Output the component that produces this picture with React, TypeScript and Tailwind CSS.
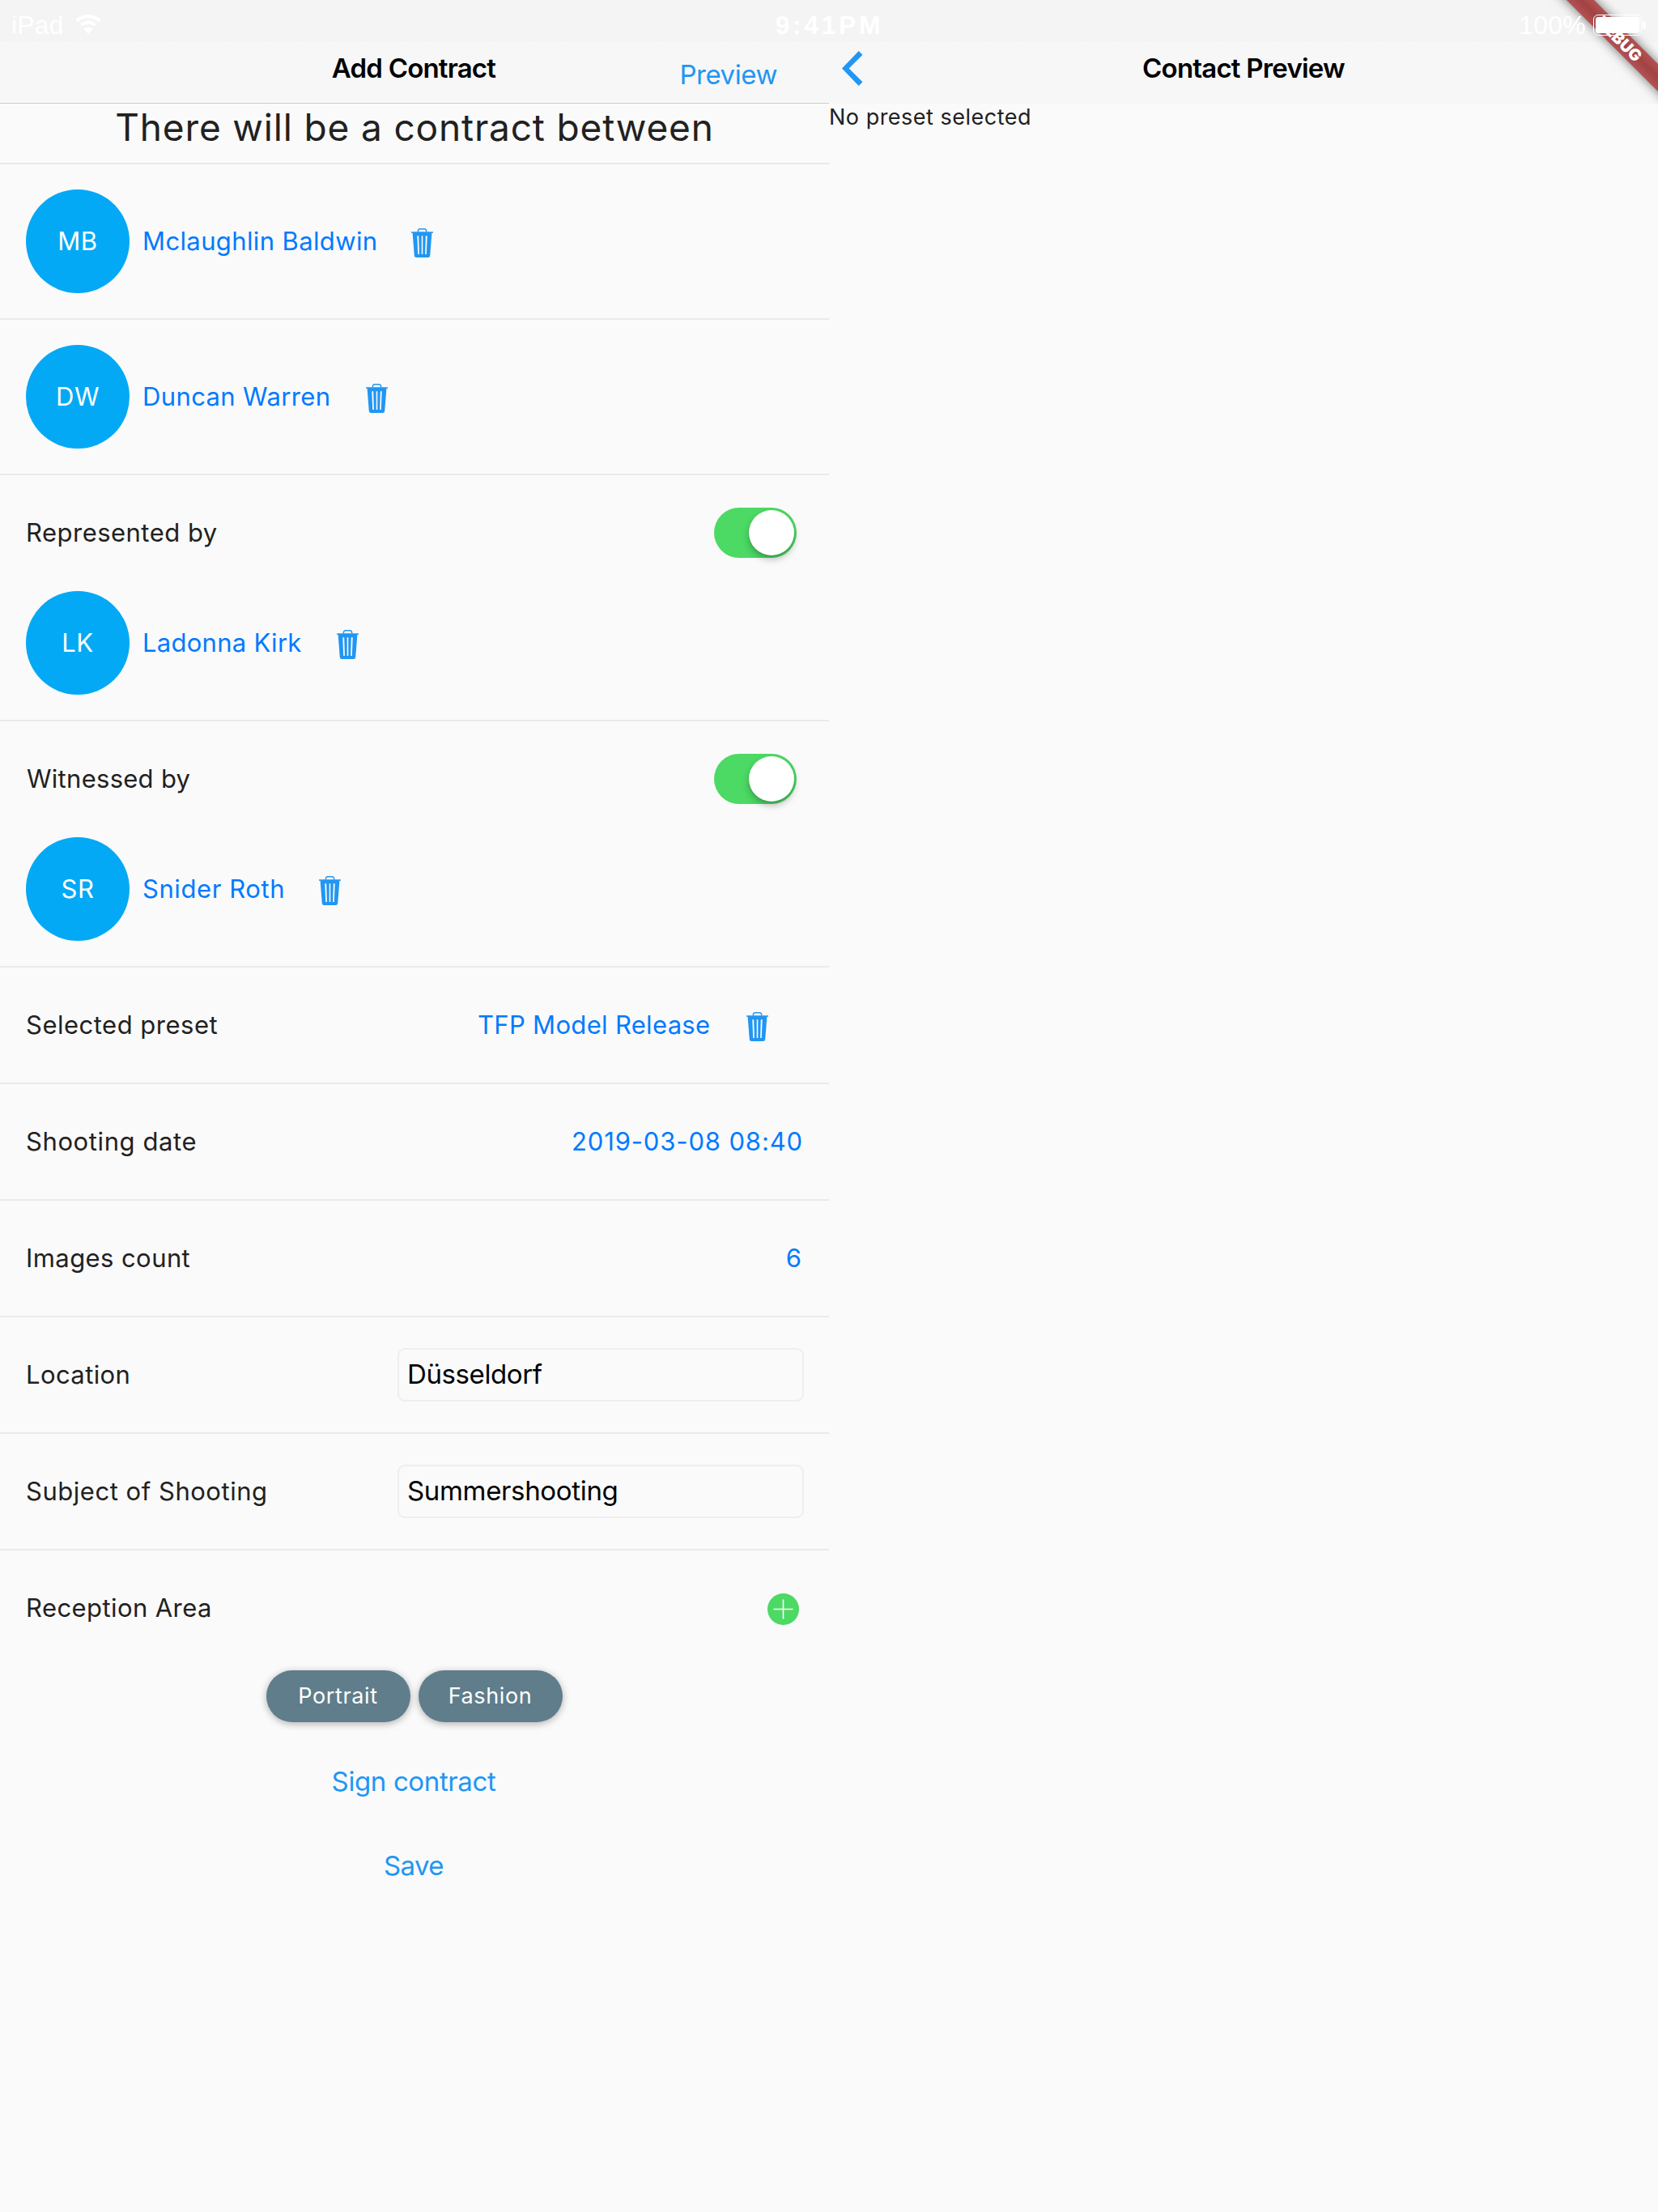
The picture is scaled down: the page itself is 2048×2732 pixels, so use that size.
import type { ReactNode } from "react";

type Person = {
  initials: string;
  name: string;
  nameClass: string;
};

const parties: Person[] = [
  { initials: "MB", name: "Mclaughlin Baldwin", nameClass: "w-[332px] tracking-[0.38px]" },
  { initials: "DW", name: "Duncan Warren", nameClass: "w-[276px] tracking-[0.37px]" },
];

const representative: Person = {
  initials: "LK",
  name: "Ladonna Kirk",
  nameClass: "w-[240px] tracking-[0.28px]",
};

const witness: Person = {
  initials: "SR",
  name: "Snider Roth",
  nameClass: "w-[218px] tracking-[0.58px]",
};

const areas = [
  { label: "Portrait", textClass: "pr-px tracking-[0.65px]" },
  { label: "Fashion", textClass: "pr-px tracking-[0.6px]" },
];

function TrashIcon() {
  return (
    <svg width="27" height="36" viewBox="0 0 27 36" fill="none" className="block shrink-0">
      <path
        d="M8.4 4.5V3a2.2 2.2 0 0 1 2.2-2.2h5.8A2.2 2.2 0 0 1 18.600 3v1.500"
        stroke="#2196f3"
        strokeWidth="1.5"
      />
      <path
        fillRule="evenodd"
        clipRule="evenodd"
        d="M0 4.200H27V5.800H25.400L23.200 33.700A2.500 2.500 0 0 1 20.700 36H6.300A2.500 2.500 0 0 1 3.800 33.700L1.600 5.800H0ZM7.300 9.200L8.200 32H9.900L9.200 9.200ZM12.700 9.200V32H14.300V9.200ZM17.800 9.200L17.100 32H18.800L19.700 9.200Z"
        fill="#2196f3"
      />
    </svg>
  );
}

function WifiIcon() {
  return (
    <svg width="32" height="24" viewBox="0 0 32 24" fill="none" className="block">
      <path d="M1.600 7.900Q16 -3.700 30.400 7.900" stroke="#fff" strokeWidth="4.300" />
      <path d="M7.200 13Q16 6.200 24.800 13" stroke="#fff" strokeWidth="4" />
      <path d="M10.300 17.500Q16 13.300 21.700 17.500L16 24Z" fill="#fff" />
    </svg>
  );
}

function BackIcon() {
  return (
    <svg width="26" height="43" viewBox="0 0 26 43" className="block">
      <path d="M20.700 0L25.500 4.700L8.600 21.500L25.500 38.300L20.700 43L0 21.500Z" fill="#2196f3" />
    </svg>
  );
}

function AddIcon() {
  return (
    <svg width="39" height="39" viewBox="0 0 39 39" className="block">
      <circle cx="19.500" cy="19.500" r="19.500" fill="#4cd964" />
      <path d="M7.500 19.500H31.500M19.500 7.500V31.500" stroke="#fff" strokeWidth="1.600" />
    </svg>
  );
}

function StatusBar() {
  return (
    <div className="absolute inset-x-0 top-0 z-20 flex h-[52px] text-[32px] leading-[62px] text-white font-['Liberation_Sans',sans-serif]">
      <div className="flex flex-1 gap-[14px] pl-[14px]">
        <span className="tracking-[0.2px]">iPad</span>
        <div className="pt-[18px]">
          <WifiIcon />
        </div>
      </div>
      <span className="pl-[2px] font-bold tracking-[3.6px]">9:41PM</span>
      <div className="flex flex-1 justify-end gap-[9px] pr-[15px]">
        <span className="tracking-[0.2px]">100%</span>
        <div className="mt-[18px] flex h-[26px] items-center gap-px">
          <div className="h-[26px] w-[60px] rounded-[6px] border border-white p-[2px]">
            <div className="h-full rounded-[3px] bg-white" />
          </div>
          <div className="h-[10px] w-1 rounded-r-full bg-white" />
        </div>
      </div>
    </div>
  );
}

function DebugBanner() {
  return (
    <div className="pointer-events-none absolute right-0 top-0 z-10 size-40 overflow-hidden">
      <div className="absolute left-[12px] top-[36px] h-6 w-[200px] rotate-45 bg-linear-to-b from-[#b25252] via-[#a34242] to-[#b25252] text-center text-[20px] font-black leading-6 text-white shadow-[0_0_14px_rgba(0,0,0,0.55)]">
        DEBUG
      </div>
    </div>
  );
}

function Avatar({ initials }: { initials: string }) {
  return (
    <div className="flex size-32 shrink-0 items-center justify-center rounded-full bg-[#04a9f5] text-[31px] tracking-[0.5px] text-white">
      {initials}
    </div>
  );
}

function PersonRow({ person }: { person: Person }) {
  return (
    <div className="flex items-center pl-8">
      <Avatar initials={person.initials} />
      <span className={`ml-4 whitespace-nowrap text-[31px] text-[#007aff] ${person.nameClass}`}>
        {person.name}
      </span>
      <div className="pt-1">
        <TrashIcon />
      </div>
    </div>
  );
}

function Switch() {
  return (
    <div className="mr-2 flex h-[62px] w-[102px] items-center justify-end rounded-full bg-[#4cd964] pr-[3px]">
      <div className="size-14 rounded-full bg-white shadow-[0_5px_8px_rgba(0,0,0,0.25),0_1px_2px_rgba(0,0,0,0.1)]" />
    </div>
  );
}

function FieldRow({
  label,
  labelClass,
  children,
}: {
  label: string;
  labelClass: string;
  children: ReactNode;
}) {
  return (
    <div className="flex h-[142px] items-center justify-between px-8">
      <span className={`whitespace-nowrap text-[31px] ${labelClass}`}>{label}</span>
      {children}
    </div>
  );
}

function Section({ children }: { children: ReactNode }) {
  return <section className="border-b-2 border-[#eaeaea]">{children}</section>;
}

function RoleSection({
  label,
  labelClass,
  person,
}: {
  label: string;
  labelClass: string;
  person: Person;
}) {
  return (
    <Section>
      <div className="pb-[31px]">
        <div className="h-[143px]">
          <FieldRow label={label} labelClass={labelClass}>
            <Switch />
          </FieldRow>
        </div>
        <PersonRow person={person} />
      </div>
    </Section>
  );
}

function TextBox({ value, textClass }: { value: string; textClass: string }) {
  return (
    <div className={`-mr-px flex h-[66px] w-[502px] items-center rounded-[9px] border-2 border-[#eeeeee] pl-[10px] text-[33px] text-black ${textClass}`}>
      {value}
    </div>
  );
}

function NavBar({ children, bordered }: { children: ReactNode; bordered?: boolean }) {
  return (
    <header
      className={`h-32 bg-linear-to-b from-[#f4f4f4] from-[52px] to-[#f7f7f7] to-[52px] pt-10 ${
        bordered ? "border-b border-[#cbcbcb]" : ""
      }`}
    >
      <div className="grid h-[88px] grid-cols-[1fr_auto_1fr] items-center">{children}</div>
    </header>
  );
}

function ContractForm() {
  return (
    <div className="w-[1024px]">
      <NavBar bordered>
        <span />
        <h1 className="pr-[2px] pt-px text-[33px] font-semibold tracking-[-0.8px] text-black">
          Add Contract
        </h1>
        <span className="justify-self-end pr-16 pt-[18px] text-[33px] tracking-[-0.45px] text-[#2196f3]">
          Preview
        </span>
      </NavBar>

      <Section>
        <h2 className="h-[73px] text-center text-[46px] leading-[58px] tracking-[0.84px]">
          There will be a contract between
        </h2>
      </Section>

      {parties.map((p) => (
        <Section key={p.initials}>
          <div className="py-[31px]">
            <PersonRow person={p} />
          </div>
        </Section>
      ))}

      <RoleSection label="Represented by" labelClass="tracking-[0.48px]" person={representative} />
      <RoleSection label="Witnessed by" labelClass="pl-px tracking-[0.28px]" person={witness} />

      <Section>
        <FieldRow label="Selected preset" labelClass="tracking-[0.5px]">
          <div className="mr-[43px] flex items-center">
            <span className="w-[332px] whitespace-nowrap text-[31px] tracking-[0.32px] text-[#007aff]">
              TFP Model Release
            </span>
            <div className="pt-1">
              <TrashIcon />
            </div>
          </div>
        </FieldRow>
      </Section>

      <Section>
        <FieldRow label="Shooting date" labelClass="tracking-[0.6px]">
          <span className="text-[31px] tracking-[0.86px] text-[#007aff]">2019-03-08 08:40</span>
        </FieldRow>
      </Section>

      <Section>
        <FieldRow label="Images count" labelClass="tracking-[0.42px]">
          <span className="mr-[2px] text-[31px] text-[#007aff]">6</span>
        </FieldRow>
      </Section>

      <Section>
        <FieldRow label="Location" labelClass="tracking-[0.4px]">
          <TextBox value="Düsseldorf" textClass="tracking-[-0.4px]" />
        </FieldRow>
      </Section>

      <Section>
        <FieldRow label="Subject of Shooting" labelClass="tracking-[0.53px]">
          <TextBox value="Summershooting" textClass="tracking-[-0.34px]" />
        </FieldRow>
      </Section>

      <FieldRow label="Reception Area" labelClass="tracking-[0.42px]">
        <div className="mr-[5px] pt-[3px]">
          <AddIcon />
        </div>
      </FieldRow>

      <div className="flex justify-center gap-[10px] pt-[6px]">
        {areas.map((area) => (
          <div
            key={area.label}
            className={`flex h-16 w-[178px] items-center justify-center rounded-full bg-[#607d8b] text-[27px] text-white shadow-[0_2px_10px_rgba(0,0,0,0.3)] ${area.textClass}`}
          >
            {area.label}
          </div>
        ))}
      </div>

      <div className="flex flex-col items-center pr-[2px] pt-[21px] text-[33px] text-[#2196f3]">
        <span className="leading-[104px] tracking-[-0.38px]">Sign contract</span>
        <span className="leading-[104px] tracking-[-0.6px]">Save</span>
      </div>
    </div>
  );
}

function PreviewPane() {
  return (
    <div className="w-[1024px]">
      <NavBar>
        <div className="pl-4">
          <BackIcon />
        </div>
        <h1 className="pt-px text-[33px] font-semibold tracking-[-0.8px] text-black">
          Contact Preview
        </h1>
        <span />
      </NavBar>
      <p className="text-[27px] leading-[33px] tracking-[0.5px]">No preset selected</p>
    </div>
  );
}

export default function App() {
  return (
    <div className="relative flex h-[2732px] w-[2048px] overflow-hidden bg-[#fafafa] text-[#212121] font-['Inter',sans-serif]">
      <ContractForm />
      <PreviewPane />
      <DebugBanner />
      <StatusBar />
    </div>
  );
}
